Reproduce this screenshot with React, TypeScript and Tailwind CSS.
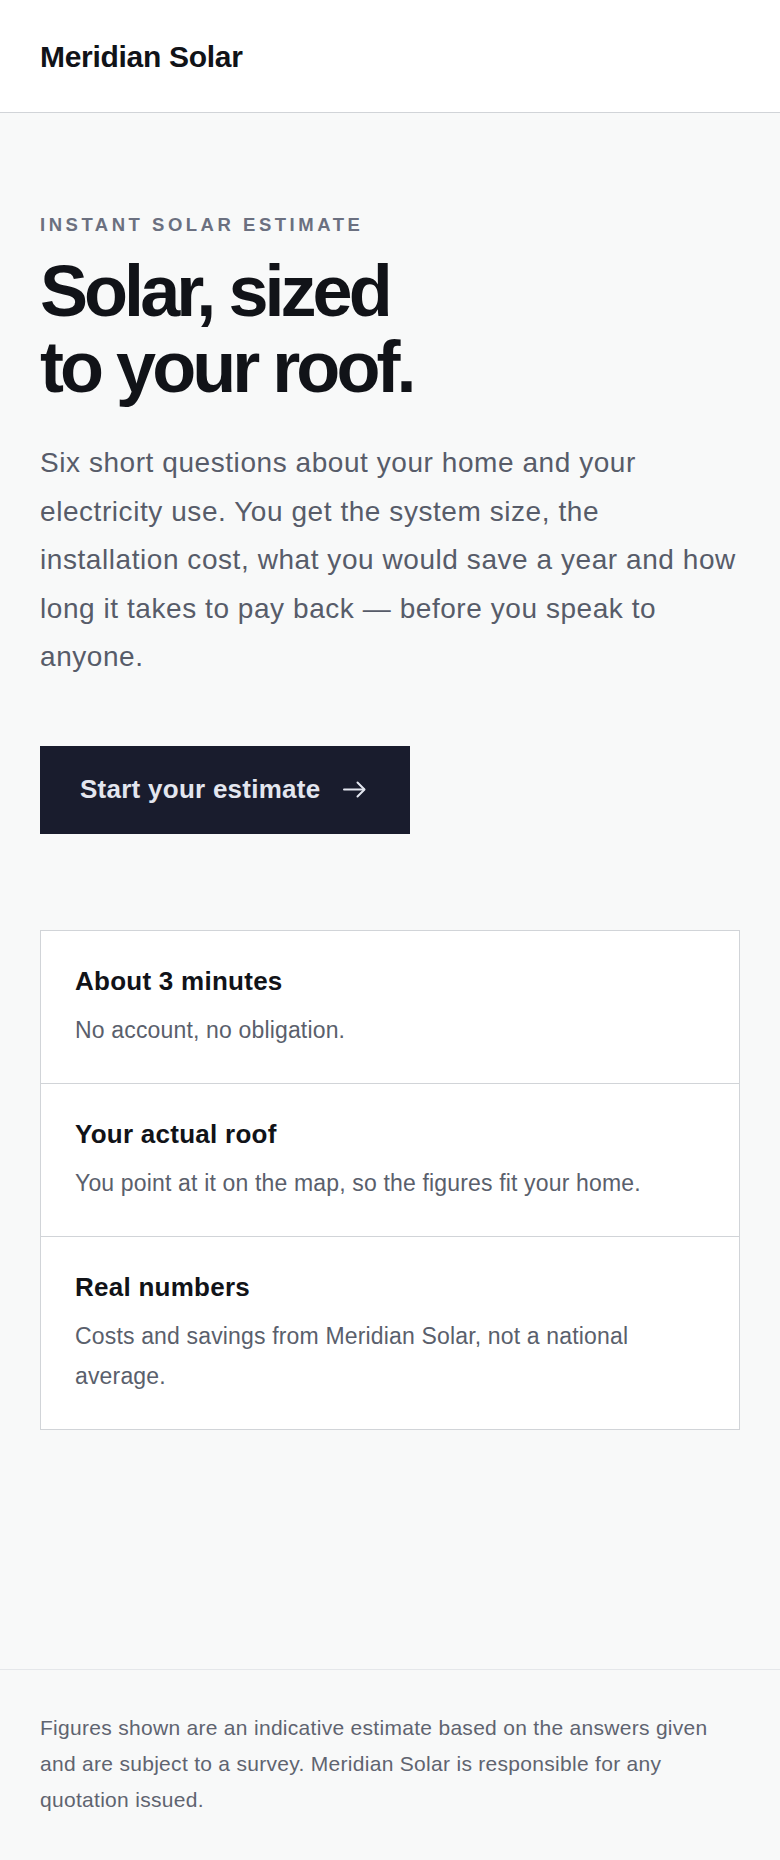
import React from "react";

const features = [
  { title: "About 3 minutes", body: "No account, no obligation." },
  { title: "Your actual roof", body: "You point at it on the map, so the figures fit your home." },
  { title: "Real numbers", body: "Costs and savings from Meridian Solar, not a national average." },
];

function ArrowRight() {
  return (
    <svg width="23" height="17" viewBox="0 0 23 17" fill="none" stroke="currentColor" strokeWidth={2} strokeLinecap="round" strokeLinejoin="round">
      <path d="M1 8.5h20" />
      <path d="M14.5 1.5l7 7-7 7" />
    </svg>
  );
}

export default function App() {
  return (
    <div className="min-h-screen flex flex-col bg-[#f8f9f9] text-[#111318] font-['Liberation_Sans',Arial,sans-serif]">
      {/* Header */}
      <header className="h-[113px] flex items-center px-10 bg-white border-b border-[#d1d4d8]">
        <span className="text-[30px] font-bold tracking-[-0.01em]">Meridian Solar</span>
      </header>

      {/* Main */}
      <main className="flex-1 px-10 pt-[98px]">
        <p className="text-[18.5px] leading-[28px] font-semibold tracking-[0.19em] text-[#6b7080]">
          INSTANT SOLAR ESTIMATE
        </p>
        <h1 className="mt-[14px] text-[72px] leading-[76px] font-bold tracking-[-0.055em]">
          Solar, sized
          <br />
          to your roof.
        </h1>
        <p className="mt-[34px] text-[28px] leading-[48.5px] tracking-[0.02em] text-[#575c69]">
          Six short questions about your home and your electricity use. You get the system size, the installation cost,
          what you would save a year and how long it takes to pay back — before you speak to anyone.
        </p>

        <button className="mt-[64px] h-[88px] w-[370px] flex items-center gap-[23px] pl-10 bg-[#191c2d] text-[#e3e6ef]">
          <span className="text-[26px] font-bold tracking-[0.01em]">Start your estimate</span>
          <ArrowRight />
        </button>

        <div className="mt-[96px] border border-[#d1d4d8] bg-white">
          {features.map((f, i) => (
            <div key={f.title} className={`px-[34px] py-[33px] ${i > 0 ? "border-t border-[#d1d4d8]" : ""}`}>
              <h2 className="text-[26px] leading-[34px] font-bold tracking-[0.01em]">{f.title}</h2>
              <p className="mt-3 text-[23px] leading-[40px] tracking-[0.007em] text-[#5a5f6c]">{f.body}</p>
            </div>
          ))}
        </div>
      </main>

      {/* Footer */}
      <footer className="border-t border-[#e5e7ea] px-10 pt-10 pb-[42px]">
        <p className="text-[21px] leading-[36px] tracking-[0.014em] text-[#5f6470]">
          Figures shown are an indicative estimate based on the answers given and are subject to a survey. Meridian Solar
          is responsible for any quotation issued.
        </p>
      </footer>
    </div>
  );
}
